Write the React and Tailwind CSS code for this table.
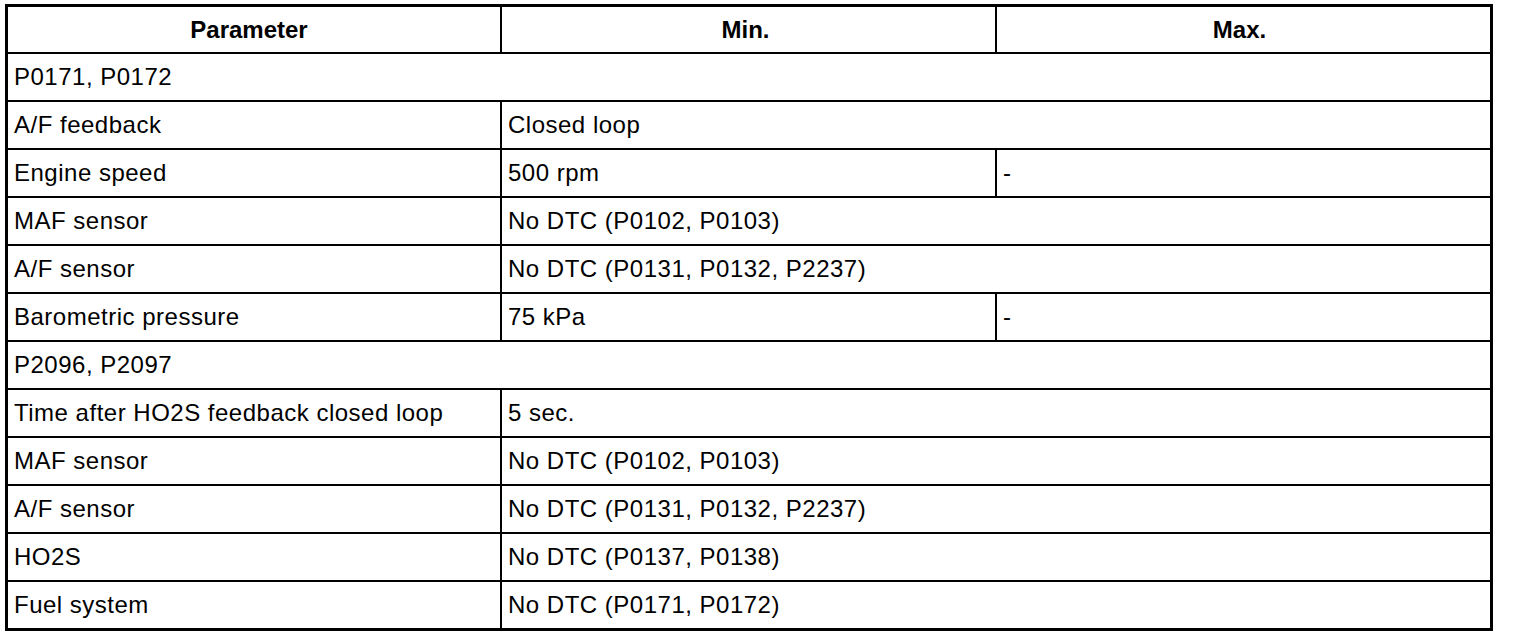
const rows = [
  { type: 'section', label: 'P0171, P0172' },
  { type: 'span', label: 'A/F feedback', min: 'Closed loop' },
  { type: 'split', label: 'Engine speed', min: '500 rpm', max: '-' },
  { type: 'span', label: 'MAF sensor', min: 'No DTC (P0102, P0103)' },
  { type: 'span', label: 'A/F sensor', min: 'No DTC (P0131, P0132, P2237)' },
  { type: 'split', label: 'Barometric pressure', min: '75 kPa', max: '-' },
  { type: 'section', label: 'P2096, P2097' },
  { type: 'span', label: 'Time after HO2S feedback closed loop', min: '5 sec.' },
  { type: 'span', label: 'MAF sensor', min: 'No DTC (P0102, P0103)' },
  { type: 'span', label: 'A/F sensor', min: 'No DTC (P0131, P0132, P2237)' },
  { type: 'span', label: 'HO2S', min: 'No DTC (P0137, P0138)' },
  { type: 'span', label: 'Fuel system', min: 'No DTC (P0171, P0172)' },
];

const cell = 'flex items-center pl-[6px] whitespace-nowrap tracking-[0.5px]';

const Row = ({ row, last }) => {
  const h = last ? 'h-[48px]' : 'h-[48px]';
  if (row.type === 'section') {
    return (
      <div className={`flex border-t-2 border-black ${h}`}>
        <div className={`${cell} flex-1`}>{row.label}</div>
      </div>
    );
  }
  return (
    <div className={`flex border-t-2 border-black ${h}`}>
      <div className={`${cell} w-[492px]`}>{row.label}</div>
      {row.type === 'span' ? (
        <div className={`${cell} flex-1 border-l-2 border-black`}>{row.min}</div>
      ) : (
        <>
          <div className={`${cell} w-[495px] border-l-2 border-black`}>{row.min}</div>
          <div className={`${cell} flex-1 border-l-2 border-black`}>{row.max}</div>
        </>
      )}
    </div>
  );
};

export default function App() {
  return (
    <div className="w-[1520px] h-[636px] bg-white pt-[4px] pl-[5px] text-black text-[24px] leading-none" style={{ fontFamily: '"Liberation Sans", Arial, sans-serif' }}>
      <div className="w-[1488px] border-[3px] border-black">
        <div className="flex h-[45px] font-bold">
          <div className="flex w-[492px] items-center justify-center pr-[10px]">Parameter</div>
          <div className="flex w-[495px] items-center justify-center border-l-2 border-black pr-[6px]">Min.</div>
          <div className="flex flex-1 items-center justify-center border-l-2 border-black pr-[8px]">Max.</div>
        </div>
        {rows.map((row, i) => (
          <Row key={i} row={row} last={i === rows.length - 1} />
        ))}
      </div>
    </div>
  );
}
